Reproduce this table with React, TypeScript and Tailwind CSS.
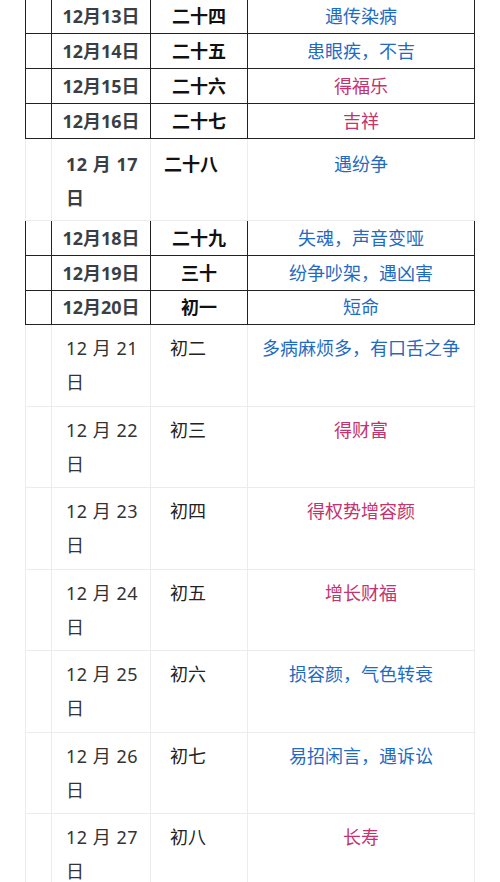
import React from 'react';

type Tone = 'blue' | 'pink';

interface Day {
  day: number;
  lunar: string;
  note: string;
  tone: Tone;
}

const toneClass: Record<Tone, string> = {
  blue: 'text-[#1f6bc2]',
  pink: 'text-[#c3336d]',
};

const topRows: Day[] = [
  { day: 13, lunar: '二十四', note: '遇传染病', tone: 'blue' },
  { day: 14, lunar: '二十五', note: '患眼疾，不吉', tone: 'blue' },
  { day: 15, lunar: '二十六', note: '得福乐', tone: 'pink' },
  { day: 16, lunar: '二十七', note: '吉祥', tone: 'pink' },
];

const midRows: Day[] = [
  { day: 18, lunar: '二十九', note: '失魂，声音变哑', tone: 'blue' },
  { day: 19, lunar: '三十', note: '纷争吵架，遇凶害', tone: 'blue' },
  { day: 20, lunar: '初一', note: '短命', tone: 'blue' },
];

const lightRows: Day[] = [
  { day: 21, lunar: '初二', note: '多病麻烦多，有口舌之争', tone: 'blue' },
  { day: 22, lunar: '初三', note: '得财富', tone: 'pink' },
  { day: 23, lunar: '初四', note: '得权势增容颜', tone: 'pink' },
  { day: 24, lunar: '初五', note: '增长财福', tone: 'pink' },
  { day: 25, lunar: '初六', note: '损容颜，气色转衰', tone: 'blue' },
  { day: 26, lunar: '初七', note: '易招闲言，遇诉讼', tone: 'blue' },
  { day: 27, lunar: '初八', note: '长寿', tone: 'pink' },
];

const gridCols = 'grid grid-cols-[26px_99px_97px_227px]';

// rows copied from the word table: dark ruled lines, everything centred
function BoldRow({ d, short }: { d: Day; short?: boolean }) {
  return (
    <div
      className={`${gridCols} border-l border-b border-[#222] ${short ? 'h-[34px]' : 'h-[35px]'}`}
    >
      <div className="border-r border-[#222]" />
      <div className="border-r border-[#222] flex items-center justify-center text-[18px] font-bold text-[#3a3f45]">
        12月{d.day}日
      </div>
      <div className="border-r border-[#222] flex items-center justify-center text-[18px] font-bold text-[#111]">
        {d.lunar}
      </div>
      <div className={`border-r border-[#222] flex items-center justify-center text-[18px] ${toneClass[d.tone]}`}>
        {d.note}
      </div>
    </div>
  );
}

function LightRow({ d, bold, h }: { d: Day; bold?: boolean; h: string }) {
  return (
    <div className={`${gridCols} border-l border-b border-[#ececec] ${h}`}>
      <div className="border-r border-[#ececec]" />
      <div
        className={`border-r border-[#ececec] pl-[14px] pr-[8px] leading-[34px] text-[18px] tracking-[0.5px] ${
          bold ? 'pt-[8px] font-bold text-[#3a3f45]' : 'pt-[6px] text-[#333]'
        }`}
      >
        12 月 {d.day} 日
      </div>
      <div
        className={`border-r border-[#ececec] leading-[34px] text-[18px] ${
          bold ? 'pl-[13px] pt-[8px] font-bold text-[#111]' : 'pl-[19px] pt-[6px] text-[#222]'
        }`}
      >
        {d.lunar}
      </div>
      <div
        className={`border-r border-[#ececec] text-center leading-[34px] text-[18px] ${
          bold ? 'pt-[8px]' : 'pt-[6px]'
        } ${toneClass[d.tone]}`}
      >
        {d.note}
      </div>
    </div>
  );
}

export default function App() {
  return (
    <div
      className="min-h-[882px] w-[500px] bg-white overflow-hidden"
      style={{ fontFamily: '"Noto Sans", "Noto Sans CJK SC", sans-serif' }}
    >
      <div className="ml-[25px] w-[450px] flex flex-col">
        {topRows.map((d, i) => (
          <BoldRow key={d.day} d={d} short={i === 0} />
        ))}
        <LightRow d={{ day: 17, lunar: '二十八', note: '遇纷争', tone: 'blue' }} bold h="h-[82px]" />
        {midRows.map((d, i) => (
          <BoldRow key={d.day} d={d} short={i === midRows.length - 1} />
        ))}
        {lightRows.map((d) => (
          <LightRow key={d.day} d={d} h="h-[81.5px]" />
        ))}
      </div>
    </div>
  );
}
